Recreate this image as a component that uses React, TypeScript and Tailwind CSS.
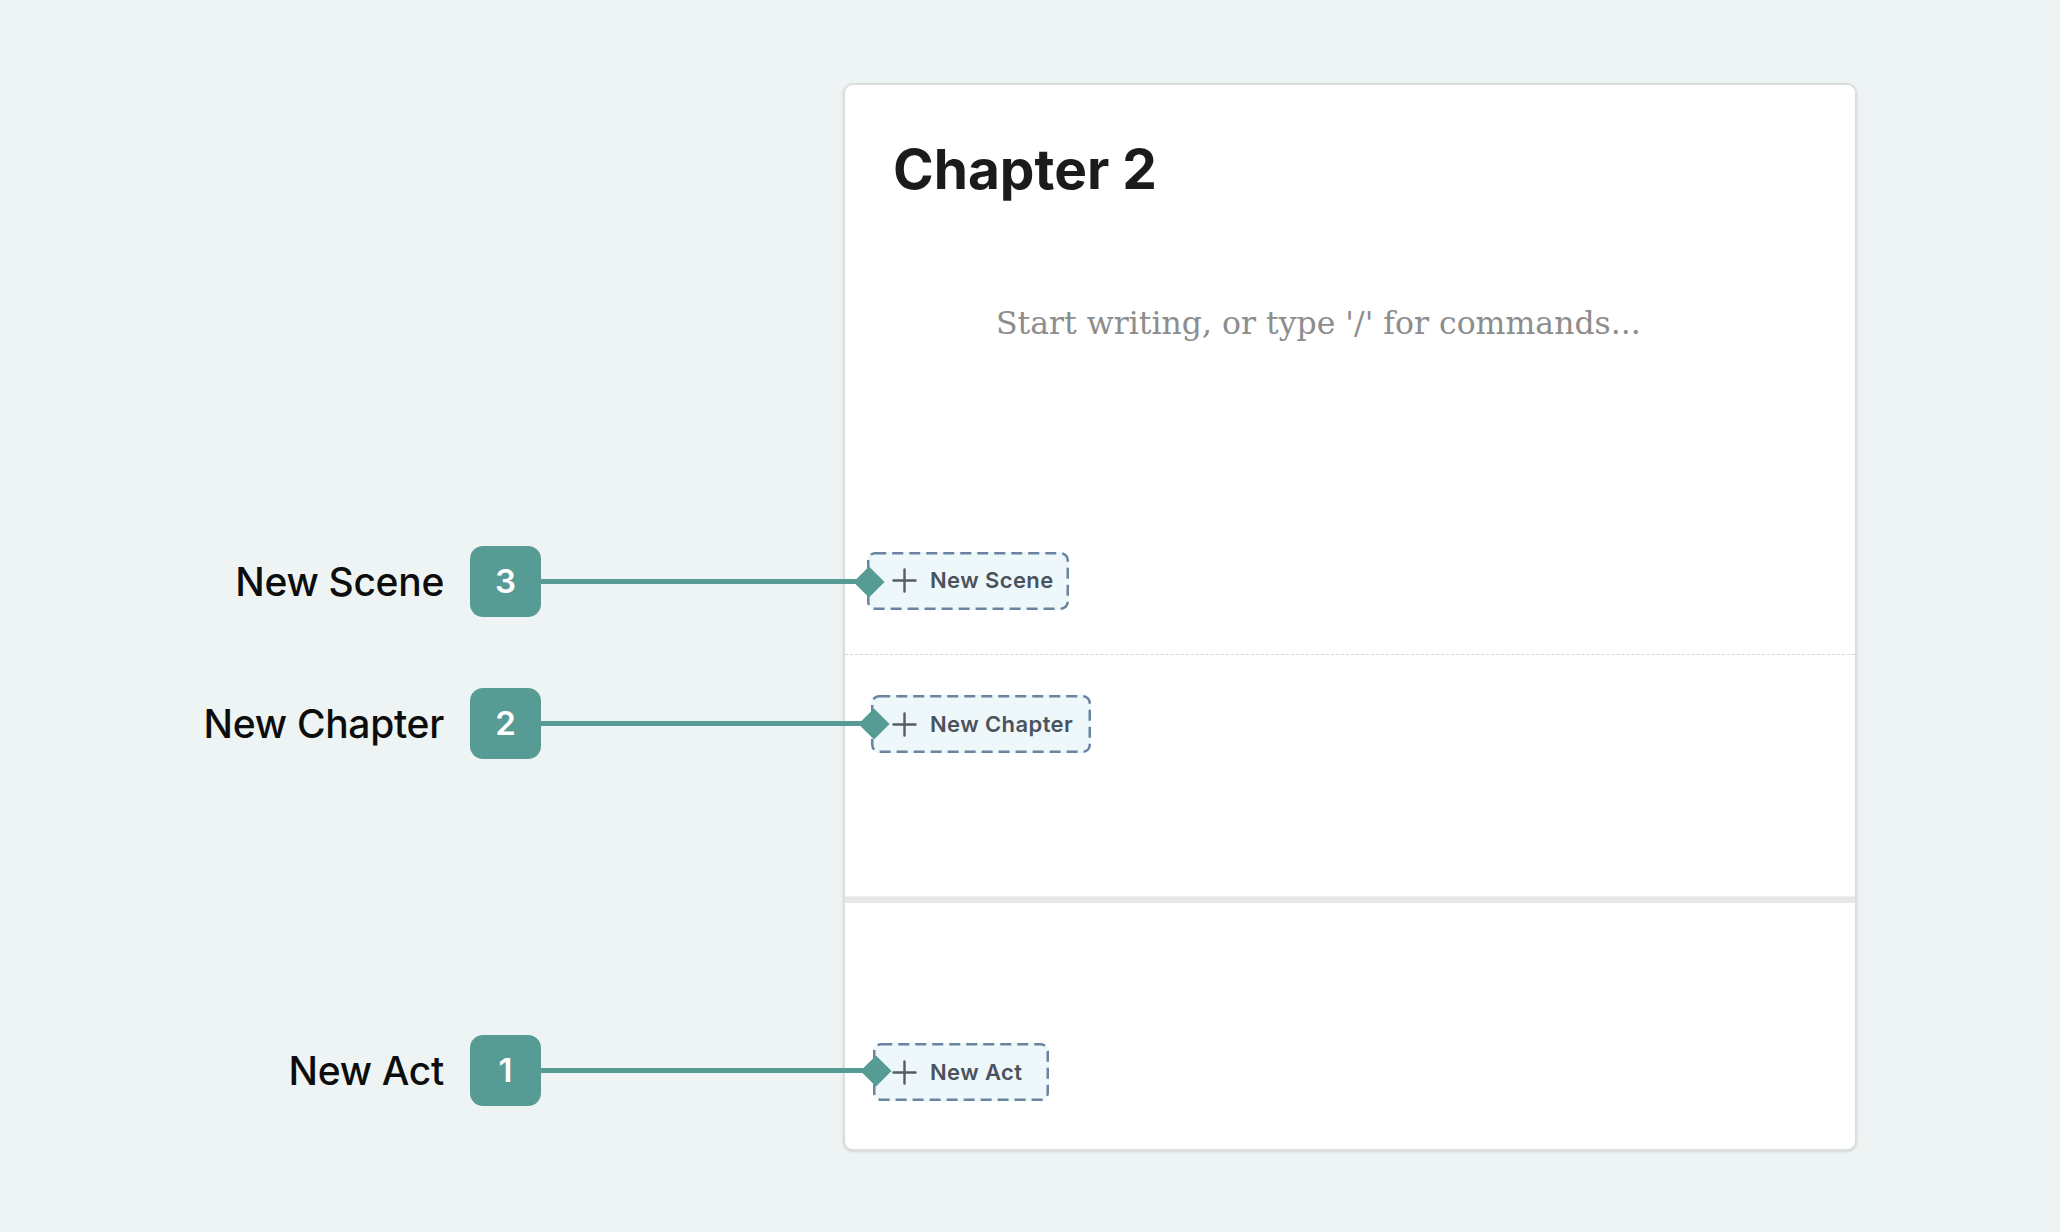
import React from 'react';

function PlusIcon() {
  return (
    <svg width="25" height="25" viewBox="0 0 25 25" className="shrink-0">
      <path d="M12.5 1.5v22M1.5 12.5h22" stroke="#565c62" strokeWidth="2.4" strokeLinecap="round" />
    </svg>
  );
}

function AddButton({label, width, pad}: {label: string; width: string; pad: string}) {
  return (
    <div className={`relative flex items-center h-[58px] rounded-[8px] bg-[#eef8fb] ${width} ${pad}`}>
      <svg className="absolute inset-0 w-full h-full" preserveAspectRatio="none">
        <rect x="1.25" y="1.25" width="calc(100% - 2.5px)" height="calc(100% - 2.5px)" rx="7" fill="none" stroke="#6a839f" strokeWidth="2.5" strokeDasharray="11 6" />
      </svg>
      <PlusIcon />
      <span className="ml-[13px] text-[22px] font-semibold tracking-[0.4px] text-[#4a535d] font-['Inter',sans-serif]">{label}</span>
    </div>
  );
}

function Callout({label, num, top, line}: {label: string; num: string; top: string; line: string}) {
  return (
    <div className={`absolute left-0 flex items-center h-[71px] ${top}`}>
      <div className="w-[444px] text-right text-[39px] leading-none font-medium tracking-[-0.3px] text-[#0d0d0d] font-['Inter',sans-serif]">{label}</div>
      <div className="ml-[26px] w-[71px] h-[71px] rounded-[13px] bg-[#569b94] flex items-center justify-center text-white text-[33px] font-semibold font-['Inter',sans-serif]">
        {num}
      </div>
      <div className={`h-[5px] bg-[#569b94] ${line}`} />
      <div className="-ml-[11px] w-[22px] h-[22px] rotate-45 bg-[#569b94]" />
    </div>
  );
}

export default function App() {
  return (
    <div className="relative w-[2060px] h-[1232px] bg-[#eef4f3] overflow-hidden">
      <div className="pl-[843px] pt-[83px]">
        <div className="w-[1014px] h-[1068px] bg-white border-2 border-[#dadede] rounded-[10px] shadow-sm flex flex-col overflow-hidden">
          <div className="h-[570px] shrink-0 border-b border-dashed border-[#d6d6d6] pt-[57px]">
            <h1 className="ml-[48px] text-[55px] leading-none font-bold text-[#1b1b1b] font-['Inter',sans-serif]">Chapter 2</h1>
            <p className="mt-[111px] ml-[151px] text-[31.5px] leading-none text-[#8d8d8d] font-['DejaVu_Serif',serif]">
              Start writing, or type '/' for commands...
            </p>
            <div className="mt-[212px] ml-[22px]">
              <AddButton label="New Scene" width="w-[202px]" pad="pl-[25px]" />
            </div>
          </div>
          <div className="h-[241px] shrink-0 pt-[40px] pl-[26px]">
            <AddButton label="New Chapter" width="w-[220px]" pad="pl-[21px]" />
          </div>
          <div className="h-[7px] shrink-0 bg-[#e5e6e8] border-t border-[#eeeff0]" />
          <div className="flex-1 pt-[140px] pl-[28px]">
            <AddButton label="New Act" width="w-[176px]" pad="pl-[19px]" />
          </div>
        </div>
      </div>

      <Callout label="New Scene" num="3" top="top-[546px]" line="w-[328px]" />
      <Callout label="New Chapter" num="2" top="top-[688px]" line="w-[333px]" />
      <Callout label="New Act" num="1" top="top-[1035px]" line="w-[335px]" />
    </div>
  );
}
